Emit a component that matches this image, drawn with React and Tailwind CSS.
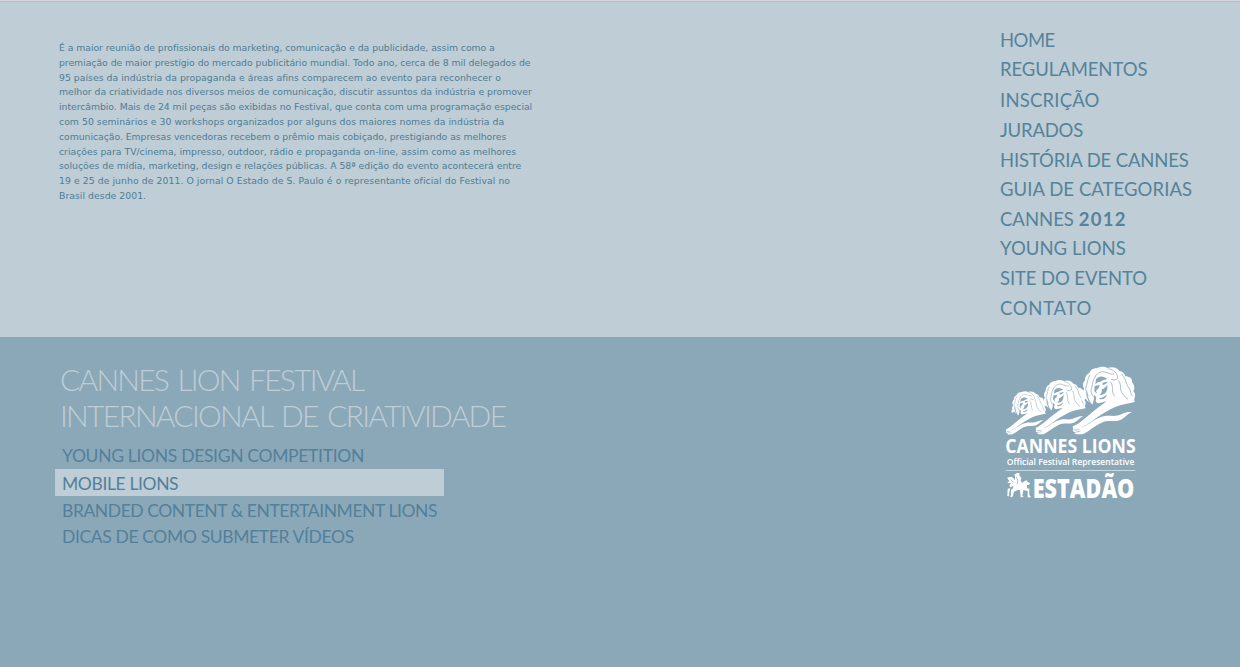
const intro = [
  ["É a maior reunião de profissionais do marketing, comunicação e da publicidade, assim como a", "tracking-[-0.05px]"],
  ["premiação de maior prestígio do mercado publicitário mundial. Todo ano, cerca de 8 mil delegados de", "tracking-[-0.04px]"],
  ["95 países da indústria da propaganda e áreas afins comparecem ao evento para reconhecer o", "tracking-[0.025px]"],
  ["melhor da criatividade nos diversos meios de comunicação, discutir assuntos da indústria e promover", "tracking-[-0.03px]"],
  ["intercâmbio. Mais de 24 mil peças são exibidas no Festival, que conta com uma programação especial", "tracking-[-0.045px]"],
  ["com 50 seminários e 30 workshops organizados por alguns dos maiores nomes da indústria da", "tracking-[0.03px]"],
  ["comunicação. Empresas vencedoras recebem o prêmio mais cobiçado, prestigiando as melhores", "tracking-[-0.04px]"],
  ["criações para TV/cinema, impresso, outdoor, rádio e propaganda on-line, assim como as melhores", "tracking-[-0.01px]"],
  ["soluções de mídia, marketing, design e relações públicas. A 58ª edição do evento acontecerá entre", "tracking-[-0.01px]"],
  ["19 e 25 de junho de 2011. O jornal O Estado de S. Paulo é o representante oficial do Festival no", "tracking-[0.06px]"],
  ["Brasil desde 2001.", "tracking-[0.03px]"],
];

const menu = [
  ["HOME", "h-[29px] tracking-[-0.5px]"],
  ["REGULAMENTOS", "h-[31px] tracking-[-0.08px]"],
  ["INSCRIÇÃO", "h-[30px] tracking-[0.2px]"],
  ["JURADOS", "h-[30px] tracking-[-0.2px]"],
  ["HISTÓRIA DE CANNES", "h-[29px] tracking-[-0.14px]"],
  ["GUIA DE CATEGORIAS", "h-[30px] tracking-[0.06px]"],
  ["CANNES", "h-[29px]", "2012"],
  ["YOUNG LIONS", "h-[30px] tracking-[0.05px]"],
  ["SITE DO EVENTO", "h-[30px] tracking-[-0.1px]"],
  ["CONTATO", "h-[29px] tracking-[0.7px]"],
];

const topics = [
  ["YOUNG LIONS DESIGN COMPETITION", "h-[26px] tracking-[-0.32px]"],
  ["MOBILE LIONS", "mb-[2px] h-[27px] bg-[#becdd6] pt-[2px] tracking-[-0.38px]"],
  ["BRANDED CONTENT & ENTERTAINMENT LIONS", "h-[26px] tracking-[-0.43px]"],
  ["DICAS DE COMO SUBMETER VÍDEOS", "h-[26px] tracking-[-0.37px]"],
];

function Lion({ transform }) {
  return (
    <g transform={transform}>
      <path
        fill="#fff"
        d="M30 123 C22 118 24 111 31 109 C26 101 29 91 34 87 C27 78 31 65 36 61 C36 47 44 41 49 39 C54 26 66 25 73 24 C84 18 96 20 104 24 C119 18 134 24 139 33 C151 35 156 43 157 49 C169 49 179 56 177 67 C187 78 184 89 181 94 C189 103 187 109 184 116 C182 121 184 124 188 125 C168 131 145 132 128 140 C103 151 79 166 57 184 C45 192 37 197 26 202 L2 207 C-4 201 0 197 7 196 C22 187 38 173 56 158 C72 145 88 133 101 124 L80 129 C73 131 69 127 68 122 L70 112 L63 105 L63 118 L58 134 L50 124 L44 108 L42 88 L40 106 L48 128 L38 116 Z"
      />
      <path
        fill="#fff"
        d="M1 208 C-1 202 4 197 12 198 L29 201 C52 192 68 174 92 169 C112 165 119 170 136 166 C152 161 161 154 177 157 C164 160 160 171 144 179 C122 188 106 178 86 188 C64 197 49 214 28 223 L10 223 C4 222 4 219 9 216 C1 218 -3 212 1 208 Z"
      />
      <g fill="none" stroke="#8ba8b9" strokeWidth="2.2" strokeLinecap="round">
        <path d="M66 51 C74 35 88 33 99 37 C110 41 116 44 122 42" />
        <path d="M50 46 C42 58 44 71 39 81 C36 91 42 100 46 108" />
        <path d="M66 51 C56 66 59 80 54 91 C54 99 57 104 61 110" />
        <path d="M106 26 C126 30 132 40 134 54 C131 60 122 62 115 58" />
        <path d="M113 66 C124 82 113 94 124 108" />
        <path d="M137 62 C148 78 137 90 151 104 C155 109 157 113 164 117" />
        <path d="M146 42 C161 57 157 71 168 84 C175 94 171 101 178 108" />
        <path d="M4 210 L18 209 M9 216 L21 214" strokeWidth="2" />
      </g>
      <g fill="#8ba8b9">
        <path d="M69 58 C78 46 93 48 103 57 C97 60 88 59 83 65 C77 65 72 67 67 73 Z" />
        <path d="M65 78 L80 75 L77 84 L69 92 L72 101 L64 94 Z" />
        <path d="M89 68 L104 65 C101 72 95 75 88 74 Z" />
        <path d="M86 88 C94 86 99 80 103 74 C105 90 99 99 92 103 L78 106 C85 101 88 95 86 88 Z" />
        <path d="M78 114 C87 115 95 110 101 104 C101 112 93 118 82 118 Z" />
      </g>
    </g>
  );
}

function Logo() {
  return (
    <svg className="block h-[145px] w-[150px] overflow-visible" viewBox="0 0 450 435" aria-label="Cannes Lions Estadão">
      <Lion transform="translate(33 80.5) scale(.64)" />
      <Lion transform="translate(123 44) scale(.8)" />
      <Lion transform="translate(234 0)" />
      <g fill="#fff">
        <text x="31" y="280" textLength="391" lengthAdjust="spacingAndGlyphs" className="font-['Open_Sans'] text-[60px] font-bold">CANNES LIONS</text>
        <text x="35" y="316" textLength="383" lengthAdjust="spacingAndGlyphs" className="font-['Open_Sans'] text-[29px] font-semibold">Official Festival Representative</text>
        <rect x="32" y="330" width="389" height="3" opacity=".55" />
        <text x="113" y="413" textLength="305" lengthAdjust="spacingAndGlyphs" className="font-['Open_Sans'] text-[80px] font-extrabold">ESTADÃO</text>
        <path d="M36 353 L49 350 L55 354 L60 361 L60 349 L58 343 L63 342 L66 338 L74 340 L73 347 L79 353 L77 362 L81 369 L89 363 L95 361 L98 365 L105 370 L102 375 L96 375 L96 385 L103 386 L103 405 L108 410 L102 413 L98 411 L98 393 L88 391 L82 389 L66 391 L57 395 L53 410 L45 411 L48 405 L48 391 L54 384 L55 377 L47 382 L43 377 L48 370 L37 369 L43 363 Z" />
        <path d="M75 388 L85 390 L82 408 L87 411 L77 412 Z M38 386 L46 385 L43 396 L42 409 L37 408 Z" />
      </g>
      <path d="M47 358 L56 368 M64 351 L69 363 L66 373" fill="none" stroke="#8ba8b9" strokeWidth="2" />
    </svg>
  );
}

export default function App() {
  return (
    <div className="flex h-[667px] w-[1240px] flex-col overflow-hidden whitespace-nowrap bg-[#8ba8b9] text-[#53809a]">
      <section className="flex h-[337px] border-t border-[#d8d6df] bg-[#becdd6]">
        <div className="flex grow justify-between border-t border-[#b3bfc7]">
          <div className="pt-[39px] pl-[59px] font-['DejaVu_Sans',sans-serif] text-[9.3px] leading-[14.8px] text-[#4f7d94]">
            {intro.map(([line, style]) => (
              <p key={line} className={style}>{line}</p>
            ))}
          </div>
          <nav className="w-[240px] pt-7 font-['Lato',sans-serif] text-[18.5px] leading-5 text-[#55839a]">
            {menu.map(([label, style, year]) => (
              <a key={label} className={`block ${style}`}>
                {label}
                {year && <span className="ml-[5px] font-bold tracking-[1.2px]">{year}</span>}
              </a>
            ))}
          </nav>
        </div>
      </section>
      <section className="flex grow justify-between font-['Lato',sans-serif]">
        <div className="pt-6 pl-[55px]">
          <h1 className="mb-[10px] pl-[5px] text-[30px] leading-9 font-light text-[#becdd6] [word-spacing:3px]">
            <span className="block tracking-[-1.78px]">CANNES LION FESTIVAL</span>
            <span className="block tracking-[-1.71px]">INTERNACIONAL DE CRIATIVIDADE</span>
          </h1>
          <ul className="w-[389px] text-[17.5px] leading-[26px]">
            {topics.map(([label, style]) => (
              <li key={label} className={`pl-[7px] ${style}`}>{label}</li>
            ))}
          </ul>
        </div>
        <div className="w-[245px] pt-[23px]">
          <Logo />
        </div>
      </section>
    </div>
  );
}
